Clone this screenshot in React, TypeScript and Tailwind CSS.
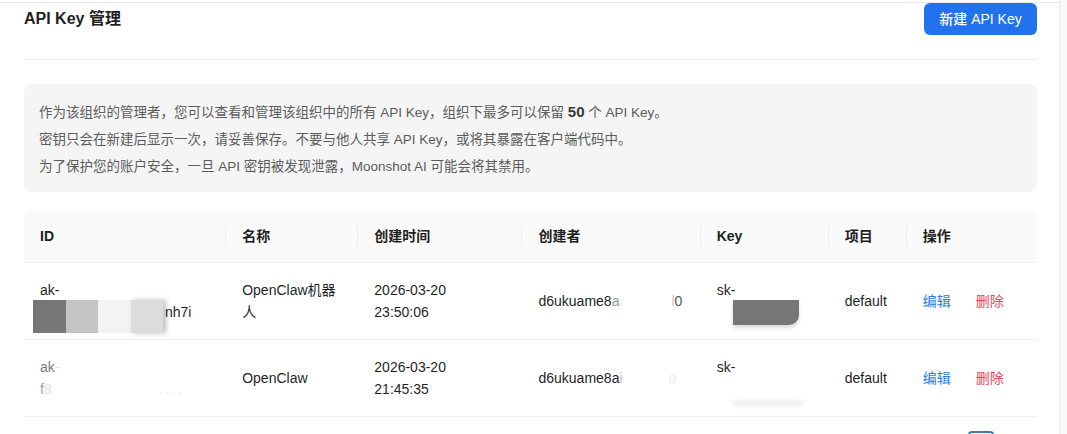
import React from "react";

interface KeyRow {
  id: string;
  name: React.ReactNode;
  date: string;
  time: string;
  project: string;
}

const columns = [
  { title: "ID", width: "w-[202px]" },
  { title: "名称", width: "w-[132px]" },
  { title: "创建时间", width: "w-[164px]" },
  { title: "创建者", width: "w-[178px]" },
  { title: "Key", width: "w-[128px]" },
  { title: "项目", width: "w-[78px]" },
  { title: "操作", width: "w-[130px]" },
];

const Actions = () => (
  <div className="flex items-center gap-[25px]">
    <span className="text-[#2f7de1] cursor-pointer">编辑</span>
    <span className="text-[#e5485a] cursor-pointer">删除</span>
  </div>
);

export default function App() {
  const rows: KeyRow[] = [
    { id: "1", name: <>OpenClaw机器<br />人</>, date: "2026-03-20", time: "23:50:06", project: "default" },
    { id: "2", name: "OpenClaw", date: "2026-03-20", time: "21:45:35", project: "default" },
  ];

  return (
    <div
      className="flex w-full h-[434px] overflow-hidden bg-white text-[#1f1f1f]"
      style={{ fontFamily: '"Liberation Sans", "Noto Sans CJK SC", sans-serif' }}
    >
      <div className="flex-1 mt-[2px] border-t border-[#e6e6e6] pl-[24px] pr-[22px]">
        {/* Header */}
        <div className="flex items-center justify-between h-[32px]">
          <h2 className="text-[16px] font-bold">API Key 管理</h2>
          <button className="h-[32px] w-[113px] rounded-[6px] bg-[#2172ec] text-white text-[14px] font-medium">
            新建 API Key
          </button>
        </div>
        <div className="mt-[24px] border-t border-[#ececec]" />

        {/* Notice */}
        <div className="mt-[24px] rounded-[8px] bg-[#f5f5f5] px-[15px] pt-[14px] pb-[12px] text-[13.5px] leading-[27px] text-[#5c5c5c]">
          <p>
            作为该组织的管理者，您可以查看和管理该组织中的所有 API Key，组织下最多可以保留{" "}
            <span className="text-[15px] font-bold text-[#3a3a3a]">50</span> 个 API Key。
          </p>
          <p>密钥只会在新建后显示一次，请妥善保存。不要与他人共享 API Key，或将其暴露在客户端代码中。</p>
          <p>为了保护您的账户安全，一旦 API 密钥被发现泄露，Moonshot AI 可能会将其禁用。</p>
        </div>

        {/* Table */}
        <table className="mt-[18px] w-full table-fixed border-collapse text-[14px] leading-[22px]">
          <colgroup>
            {columns.map((c) => (
              <col key={c.title} className={c.width} />
            ))}
          </colgroup>
          <thead>
            <tr>
              {columns.map((c, i) => (
                <th
                  key={c.title}
                  className={`relative bg-[#fafafa] px-4 py-[15px] text-left font-semibold border-b border-[#f0f0f0] ${
                    i === 0 ? "rounded-tl-[8px]" : ""
                  } ${i === columns.length - 1 ? "rounded-tr-[8px]" : ""}`}
                >
                  {c.title}
                  {i < columns.length - 1 && (
                    <span className="absolute right-0 top-1/2 -translate-y-1/2 h-[22px] w-px bg-[#ededed]" />
                  )}
                </th>
              ))}
            </tr>
          </thead>
          <tbody>
            {rows.map((row, idx) => (
              <tr key={row.id} className="border-b border-[#f0f0f0]">
                {/* ID */}
                <td className="px-4 py-4 align-middle">
                  {idx === 0 ? (
                    <>
                      <div>ak-</div>
                      <div className="flex h-[22px] -ml-[7px]">
                        <div className="flex h-[33px] mt-[-1px] shrink-0">
                          <div className="w-[32.5px] bg-[#777777]" />
                          <div className="w-[32.5px] bg-[#c4c4c4]" />
                          <div className="w-[32.5px] bg-[#f3f3f3]" />
                          <div className="w-[32.5px] bg-[#dcdcdc] shadow-[3px_0_5px_rgba(0,0,0,0.25)]" />
                        </div>
                        <span className="ml-[2px]">nh7i</span>
                      </div>
                    </>
                  ) : (
                    <>
                      <div>
                        <span className="text-[#7a7a7a]">ak</span>
                        <span className="text-[#e2e2e2]">-</span>
                      </div>
                      <div className="flex items-center">
                        <span className="text-[#a0a0a0]">f</span>
                        <span className="text-[#e0e0e0]">8</span>
                        <span className="ml-[108px] text-[#e8e8e8] tracking-[2px]">....</span>
                      </div>
                    </>
                  )}
                </td>
                {/* Name */}
                <td className="px-4 py-4 align-middle">{row.name}</td>
                {/* Created at */}
                <td className="px-4 py-4 align-middle">
                  <div>{row.date}</div>
                  <div>{row.time}</div>
                </td>
                {/* Creator */}
                <td className="px-4 py-4 align-middle whitespace-nowrap">
                  {idx === 0 ? (
                    <>
                      d6ukuame8<span className="text-[#9a9a9a]">a</span>
                      <span className="inline-block w-[52px]" />
                      <span className="text-[#c8c8c8]">l</span>
                      <span className="text-[#555]">0</span>
                    </>
                  ) : (
                    <>
                      d6ukuame8a<span className="text-[#c4c4c4]">i</span>
                      <span className="inline-block w-[46px]" />
                      <span className="text-[#ececec]">o</span>
                    </>
                  )}
                </td>
                {/* Key */}
                <td className="px-4 py-4 align-middle">
                  <div>sk-</div>
                  {idx === 0 ? (
                    <div className="ml-[16px] mt-[-1px] mb-[-2px] h-[25px] w-[66px] bg-[#767676] rounded-br-[10px] shadow-[0_3px_4px_rgba(0,0,0,0.15)]" />
                  ) : (
                    <div className="relative h-[22px]">
                      <div className="absolute left-[16px] bottom-[-6px] h-[6px] w-[70px] rounded-full bg-[#ececec] blur-[2px]" />
                    </div>
                  )}
                </td>
                {/* Project */}
                <td className="px-4 py-4 align-middle">{row.project}</td>
                {/* Actions */}
                <td className="px-4 py-4 align-middle">
                  <Actions />
                </td>
              </tr>
            ))}
          </tbody>
        </table>

        {/* Pagination */}
        <div className="mt-[14px] flex justify-end pr-[43px]">
          <div className="h-[26px] w-[26px] rounded-[4px] border-2 border-[#3f7aa8]" />
        </div>
      </div>
      <div className="w-[8px] border-l border-[#ececec] bg-[#f8f8f8]" />
    </div>
  );
}
